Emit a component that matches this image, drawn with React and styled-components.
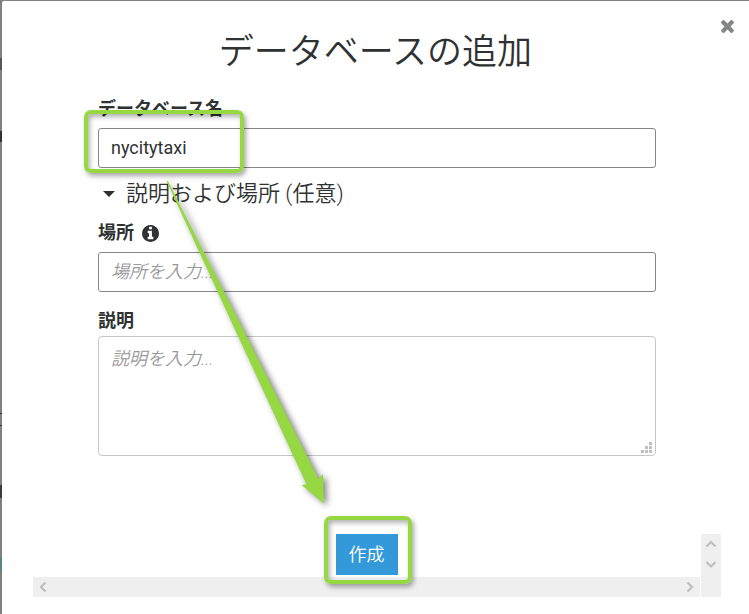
import React, { useState } from 'react';
import styled, { createGlobalStyle } from 'styled-components';

const GlobalStyle = createGlobalStyle`
  * {
    box-sizing: border-box;
  }

  body {
    margin: 0;
    color: #2f3232;
    background: #808080;
    font-family: Roboto, 'Noto Sans CJK JP', sans-serif;
    font-size: 18px;
  }

  button, input, textarea {
    font: inherit;
    color: inherit;
  }
`;

const Backdrop = styled.div`
  min-height: 100vh;
  padding: 1px 0 0 2px;
  background: linear-gradient(
    #808080 58px, #55565c 58px, #55565c 70px, #808080 70px,
    #808080 131px, #303234 131px, #303234 142px, #808080 142px,
    #808080 413px, #333 413px, #333 414px, #808080 414px,
    #808080 425px, #333 425px, #333 426px, #808080 426px,
    #808080 485px, #3a3a44 485px, #3a3a44 498px, #808080 498px,
    #808080 557px, #5a8588 557px, #5a8588 572px, #808080 572px
  );
`;

const Modal = styled.div`
  position: relative;
  min-height: calc(100vh - 1px);
  padding-top: 28px;
  background: #fff;
  border-top-left-radius: 2px;
`;

const CloseButton = styled.button`
  position: absolute;
  top: 13px;
  right: 9px;
  display: flex;
  padding: 6px;
  border: none;
  background: none;
  color: #858786;
  cursor: pointer;
`;

const Title = styled.h1`
  margin: 0 0 20px;
  font-size: 35px;
  font-weight: 350;
  line-height: 48px;
  text-align: center;
`;

const Form = styled.form`
  display: flex;
  flex-direction: column;
  padding: 0 93px 0 96px;
`;

const FieldLabel = styled.label`
  display: flex;
  align-items: center;
  gap: 8px;
  height: 24px;
  margin-bottom: ${props => (props.$tight ? '3px' : '7px')};
  font-weight: 700;
  line-height: 24px;
`;

const Control = styled.div`
  position: relative;
  display: flex;
`;

const TextInput = styled.input`
  width: 100%;
  height: 40px;
  padding: 0 12px 2px;
  border: 1px solid #858786;
  border-radius: 3px;
  background: #fff;
  outline: none;

  &::placeholder {
    color: #999;
    opacity: 1;
    font-style: italic;
    font-weight: 350;
  }
`;

const TextArea = styled.textarea`
  width: 100%;
  height: 120px;
  padding: 9px 12px;
  border: 1px solid #c6c6c6;
  border-radius: 4px;
  background: #fff;
  line-height: 26px;
  resize: none;
  outline: none;

  &::placeholder {
    color: #999;
    opacity: 1;
    font-style: italic;
    font-weight: 350;
  }
`;

const Grip = styled.svg`
  position: absolute;
  right: 4px;
  bottom: 3px;
  fill: #bfbfbf;
`;

const SectionToggle = styled.button`
  display: flex;
  align-items: center;
  align-self: flex-start;
  gap: 11px;
  height: 34px;
  margin: 9px 0 10px;
  padding: 0 0 0 5px;
  border: none;
  background: none;
  font-size: 22px;
  font-weight: 350;
  line-height: 34px;
  cursor: pointer;
`;

const Section = styled.div`
  display: flex;
  flex-direction: column;
`;

const SectionGap = styled.div`
  height: 17px;
`;

const Footer = styled.div`
  display: grid;
  grid-template-columns: 1fr 20px;
  column-gap: 1px;
  margin: 78px 28px 0 31px;
`;

const Actions = styled.div`
  display: flex;
  justify-content: center;
  height: 43px;
`;

const Anchor = styled.div`
  position: relative;
  height: 41px;
`;

const CreateButton = styled.button`
  height: 41px;
  padding: 0 13px;
  border: none;
  background: #3399d8;
  color: #fff;
  font-weight: 350;
  line-height: 40px;
  cursor: pointer;
`;

const VerticalBar = styled.div`
  grid-column: 2;
  grid-row: 1 / 3;
  display: flex;
  flex-direction: column;
  background: #efefef;
`;

const HorizontalBar = styled.div`
  grid-column: 1;
  display: flex;
  justify-content: space-between;
  height: 20px;
  background: #efefef;
`;

const ScrollButton = styled.button`
  display: flex;
  align-items: center;
  justify-content: center;
  width: 20px;
  height: 20px;
  padding: 0;
  border: none;
  background: none;
  color: #bfbfbf;
`;

const Highlight = styled.span`
  position: absolute;
  inset: ${props => props.$inset};
  width: ${props => props.$width || 'auto'};
  border: 4px solid #96d842;
  border-radius: 7px;
  box-shadow: 2px 3px 5px rgba(0, 0, 0, 0.35), inset 2px 3px 5px rgba(0, 0, 0, 0.3);
  pointer-events: none;
`;

const Arrow = styled.svg`
  position: absolute;
  top: 180px;
  left: 164px;
  pointer-events: none;
  filter: drop-shadow(3px 2px 3px rgba(0, 0, 0, 0.5));
`;

const chevrons = {
  up: 'M1.5 8.5 L6 4 L10.5 8.5',
  down: 'M1.5 4 L6 8.5 L10.5 4',
  left: 'M8.5 1.5 L4 6 L8.5 10.5',
  right: 'M3.5 1.5 L8 6 L3.5 10.5',
};

function Chevron({ direction }) {
  return (
    <svg width="12" height="12" viewBox="0 0 12 12" aria-hidden="true">
      <path d={chevrons[direction]} fill="none" stroke="currentColor" strokeWidth="2.2" />
    </svg>
  );
}

function CloseIcon() {
  return (
    <svg width="13" height="13" viewBox="302 366 1188 1188" aria-hidden="true">
      <path
        fill="currentColor"
        d="M1490 1322q0 40-28 68l-136 136q-28 28-68 28t-68-28l-294-294-294 294q-28 28-68 28t-68-28l-136-136q-28-28-28-68t28-68l294-294-294-294q-28-28-28-68t28-68l136-136q28-28 68-28t68 28l294 294 294-294q28-28 68-28t68 28l136 136q28 28 28 68t-28 68l-294 294 294 294q28 28 28 68z"
      />
    </svg>
  );
}

function InfoIcon() {
  return (
    <svg width="17" height="17" viewBox="0 128 1536 1536" aria-hidden="true">
      <path
        fill="currentColor"
        d="M1024 1376v-160q0-14-9-23t-23-9h-96v-512q0-14-9-23t-23-9h-320q-14 0-23 9t-9 23v160q0 14 9 23t23 9h96v320h-96q-14 0-23 9t-9 23v160q0 14 9 23t23 9h448q14 0 23-9t9-23zm-128-896v-160q0-14-9-23t-23-9h-192q-14 0-23 9t-9 23v160q0 14 9 23t23 9h192q14 0 23-9t9-23zm640 416q0 209-103 385.5t-279.5 279.5-385.5 103-385.5-103-279.5-279.5-103-385.5 103-385.5 279.5-279.5 385.5-103 385.5 103 279.5 279.5 103 385.5z"
      />
    </svg>
  );
}

function App() {
  const [name, setName] = useState('nycitytaxi');
  const [location, setLocation] = useState('');
  const [description, setDescription] = useState('');
  const [open, setOpen] = useState(true);

  const handleSubmit = (e) => {
    e.preventDefault();
  };

  return (
    <Backdrop>
      <GlobalStyle />
      <Modal role="dialog" aria-labelledby="dialog-title">
        <CloseButton type="button" aria-label="閉じる">
          <CloseIcon />
        </CloseButton>
        <Title id="dialog-title">データベースの追加</Title>

        <Form id="database-form" onSubmit={handleSubmit}>
          <FieldLabel htmlFor="name">データベース名</FieldLabel>
          <Control>
            <TextInput id="name" value={name} onChange={(e) => setName(e.target.value)} />
            <Highlight $inset="-18px auto -5px -14px" $width="160px" />
          </Control>

          <SectionToggle type="button" aria-expanded={open} onClick={() => setOpen(!open)}>
            <svg width="12" height="6" viewBox="0 0 12 6" aria-hidden="true">
              <path d="M0 0H12L6 6Z" fill="currentColor" />
            </svg>
            説明および場所 (任意)
          </SectionToggle>

          {open && (
            <Section>
              <FieldLabel htmlFor="location">
                場所
                <InfoIcon />
              </FieldLabel>
              <Control>
                <TextInput
                  id="location"
                  placeholder="場所を入力..."
                  value={location}
                  onChange={(e) => setLocation(e.target.value)}
                />
              </Control>
              <SectionGap />
              <FieldLabel htmlFor="description" $tight>説明</FieldLabel>
              <Control>
                <TextArea
                  id="description"
                  placeholder="説明を入力..."
                  value={description}
                  onChange={(e) => setDescription(e.target.value)}
                />
                <Grip width="11" height="11" viewBox="0 0 11 11" aria-hidden="true">
                  <path d="M8 0h3v3h-3zM4 4h3v3h-3zM8 4h3v3h-3zM0 8h3v3h-3zM4 8h3v3h-3zM8 8h3v3h-3z" />
                </Grip>
              </Control>
            </Section>
          )}
        </Form>

        <Footer>
          <Actions>
            <Anchor>
              <CreateButton type="submit" form="database-form">作成</CreateButton>
              <Highlight $inset="-18px -14px -9px -12px" />
            </Anchor>
          </Actions>
          <VerticalBar>
            <ScrollButton type="button" aria-label="上へ"><Chevron direction="up" /></ScrollButton>
            <ScrollButton type="button" aria-label="下へ"><Chevron direction="down" /></ScrollButton>
          </VerticalBar>
          <HorizontalBar>
            <ScrollButton type="button" aria-label="左へ"><Chevron direction="left" /></ScrollButton>
            <ScrollButton type="button" aria-label="右へ"><Chevron direction="right" /></ScrollButton>
          </HorizontalBar>
        </Footer>

        <Arrow width="164" height="328" viewBox="0 0 164 328" aria-hidden="true">
          <path d="M0.5 0 L2 0 L152.5 298 L157 293 L158 322.5 L135.5 304 L140.5 303.5 Z" fill="#96d842" />
        </Arrow>
      </Modal>
    </Backdrop>
  );
}

export default App;
